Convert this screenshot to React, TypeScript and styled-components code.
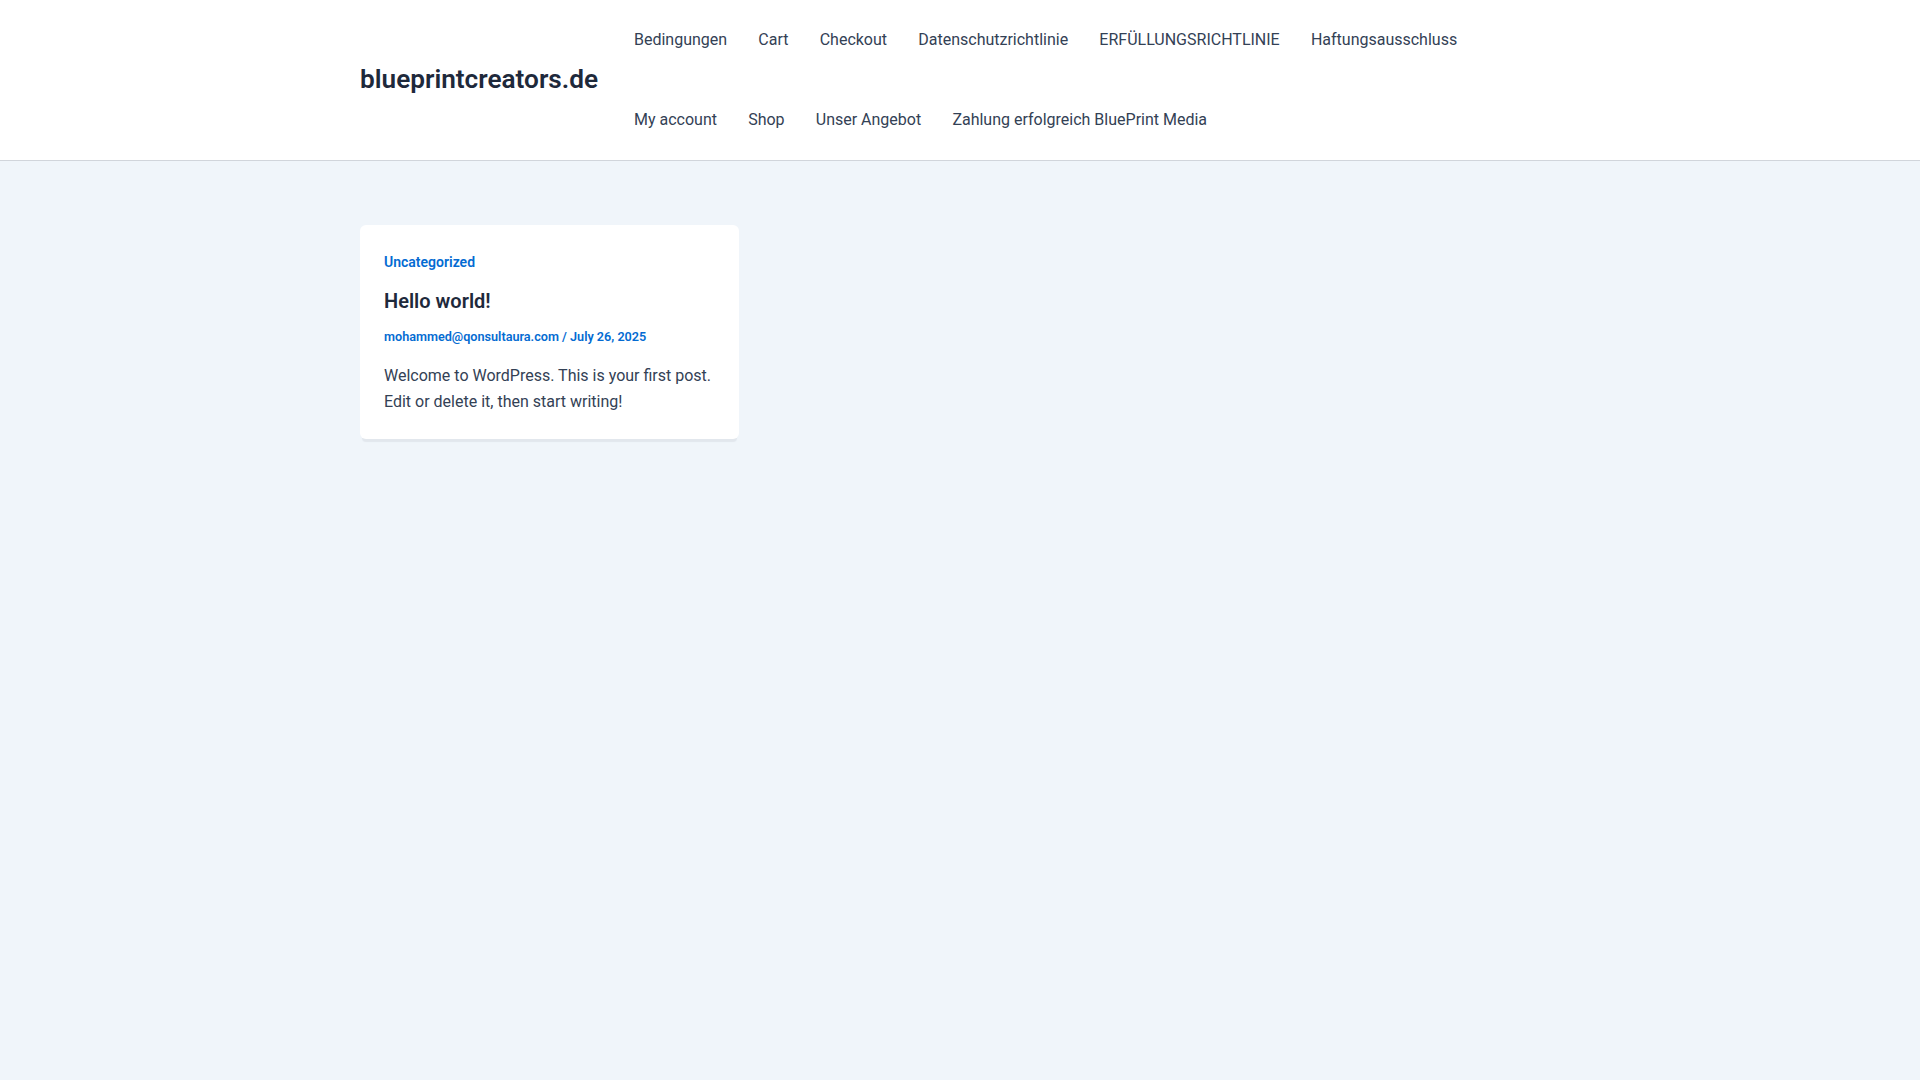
import React from "react";
import styled, { createGlobalStyle } from "styled-components";

const GlobalStyle = createGlobalStyle`
  html, body { margin: 0; padding: 0; }
  body {
    background: #f0f5fa;
    font-family: Roboto, "Liberation Sans", sans-serif;
    color: #334155;
    min-height: 1080px;
  }
  * { box-sizing: border-box; }
`;

const Header = styled.header`
  background: #ffffff;
  border-bottom: 1px solid #d1d5db;
`;

const HeaderInner = styled.div`
  width: 1200px;
  margin: 0 auto;
  display: flex;
  align-items: center;
  min-height: 160px;
`;

const Logo = styled.a`
  font-size: 26.2px;
  font-weight: 600;
  color: #1e293b;
  text-decoration: none;
  white-space: nowrap;
  line-height: 1.2;
  flex-shrink: 0;
`;

const Menu = styled.ul`
  list-style: none;
  margin: 0 0 0 20.3px;
  padding: 0;
  display: flex;
  flex-wrap: wrap;
  flex: 1;
`;

const MenuItem = styled.li`
  height: 80px;
  display: flex;
  align-items: center;
  padding-bottom: 2px;
`;

const MenuLink = styled.a`
  padding: 0 15.6px;
  font-size: 16px;
  color: #334155;
  text-decoration: none;
  white-space: nowrap;
`;

const Main = styled.main`
  width: 1200px;
  margin: 0 auto;
  padding-top: 64px;
  display: grid;
  grid-template-columns: repeat(3, 1fr);
  column-gap: 31.5px;
  align-items: start;
`;

const Card = styled.article`
  background: #ffffff;
  border-radius: 6px;
  padding: 27px 24px 24px;
  box-shadow: 0 5px 1px -2px #e2e7ed;
`;

const Category = styled.a`
  display: block;
  font-size: 14px;
  line-height: 20px;
  font-weight: 600;
  color: #046bd2;
  text-decoration: none;
`;

const Title = styled.h2`
  margin: 16px 0 0;
  font-size: 20px;
  line-height: 26px;
  font-weight: 600;
  color: #1e293b;
`;

const Meta = styled.div`
  margin-top: 12px;
  font-size: 12.65px;
  line-height: 21px;
  font-weight: 600;
  color: #046bd2;
`;

const MetaLink = styled.a`
  color: #046bd2;
  text-decoration: none;
`;

const Excerpt = styled.p`
  margin: 15.5px 0 0;
  font-size: 16px;
  line-height: 26px;
  color: #334155;
`;

const menuItems = [
  "Bedingungen",
  "Cart",
  "Checkout",
  "Datenschutzrichtlinie",
  "ERFÜLLUNGSRICHTLINIE",
  "Haftungsausschluss",
  "My account",
  "Shop",
  "Unser Angebot",
  "Zahlung erfolgreich BluePrint Media",
];

export default function App() {
  return (
    <>
      <GlobalStyle />
      <Header>
        <HeaderInner>
          <Logo href="#">blueprintcreators.de</Logo>
          <Menu>
            {menuItems.map((m) => (
              <MenuItem key={m}>
                <MenuLink href="#">{m}</MenuLink>
              </MenuItem>
            ))}
          </Menu>
        </HeaderInner>
      </Header>
      <Main>
        <Card>
          <Category href="#">Uncategorized</Category>
          <Title>Hello world!</Title>
          <Meta>
            <MetaLink href="#">mohammed@qonsultaura.com</MetaLink> /{" "}
            <MetaLink href="#">July 26, 2025</MetaLink>
          </Meta>
          <Excerpt>
            Welcome to WordPress. This is your first post. Edit or delete it,
            then start writing!
          </Excerpt>
        </Card>
      </Main>
    </>
  );
}
